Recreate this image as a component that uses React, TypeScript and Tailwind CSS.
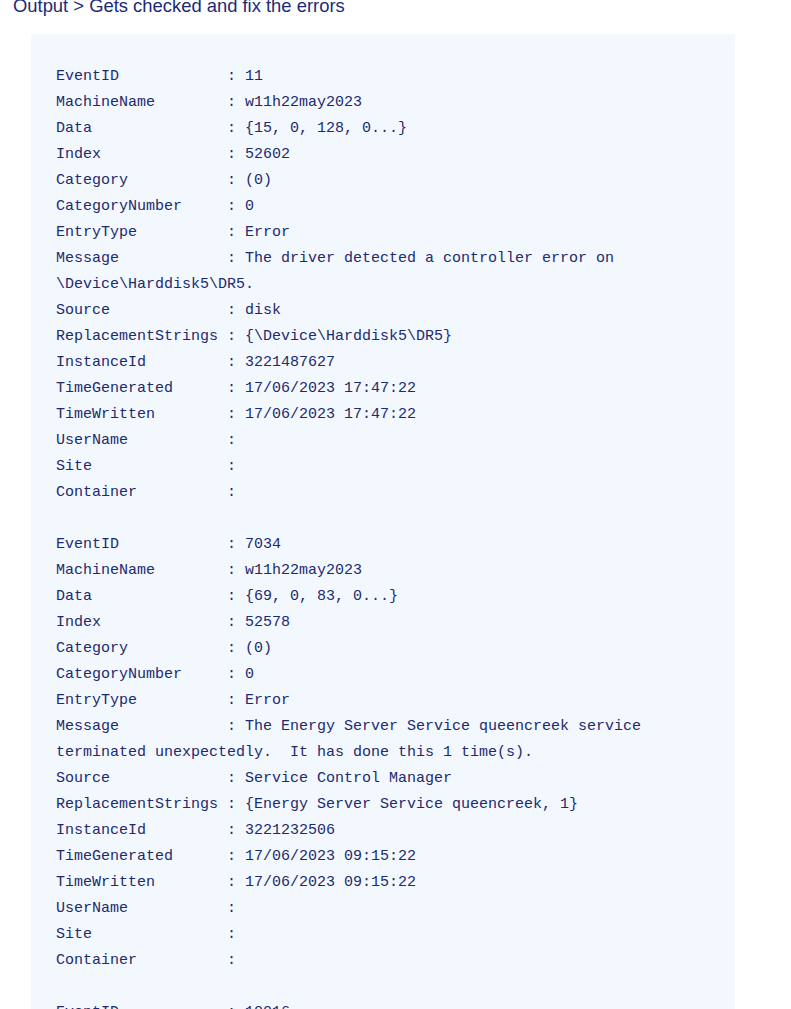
import React from "react";

const code = `
EventID            : 11
MachineName        : w11h22may2023
Data               : {15, 0, 128, 0...}
Index              : 52602
Category           : (0)
CategoryNumber     : 0
EntryType          : Error
Message            : The driver detected a controller error on
\\Device\\Harddisk5\\DR5.
Source             : disk
ReplacementStrings : {\\Device\\Harddisk5\\DR5}
InstanceId         : 3221487627
TimeGenerated      : 17/06/2023 17:47:22
TimeWritten        : 17/06/2023 17:47:22
UserName           :
Site               :
Container          :

EventID            : 7034
MachineName        : w11h22may2023
Data               : {69, 0, 83, 0...}
Index              : 52578
Category           : (0)
CategoryNumber     : 0
EntryType          : Error
Message            : The Energy Server Service queencreek service
terminated unexpectedly.  It has done this 1 time(s).
Source             : Service Control Manager
ReplacementStrings : {Energy Server Service queencreek, 1}
InstanceId         : 3221232506
TimeGenerated      : 17/06/2023 09:15:22
TimeWritten        : 17/06/2023 09:15:22
UserName           :
Site               :
Container          :

EventID            : 10016
MachineName        : w11h22may2023`;

export default function App() {
  return (
    <div className="h-[1009px] w-[791px] overflow-hidden bg-white">
      <h2
        className="mt-[-6px] ml-[13px] text-[18.4px] leading-[23px] text-[#1b2a78]"
        style={{ fontFamily: '"Liberation Sans", Arial, sans-serif' }}
      >
        Output &gt; Gets checked and fix the errors
      </h2>
      <div className="ml-[31px] mt-[17px] w-[704px] bg-[#f3f8fe] pl-[25px] pt-[4px] pb-10">
        <pre
          className="m-0 whitespace-pre text-[15px] leading-[26px] text-[#1c2a6e]"
          style={{ fontFamily: '"Liberation Mono", "DejaVu Sans Mono", monospace' }}
        >
          {code}
        </pre>
      </div>
    </div>
  );
}
